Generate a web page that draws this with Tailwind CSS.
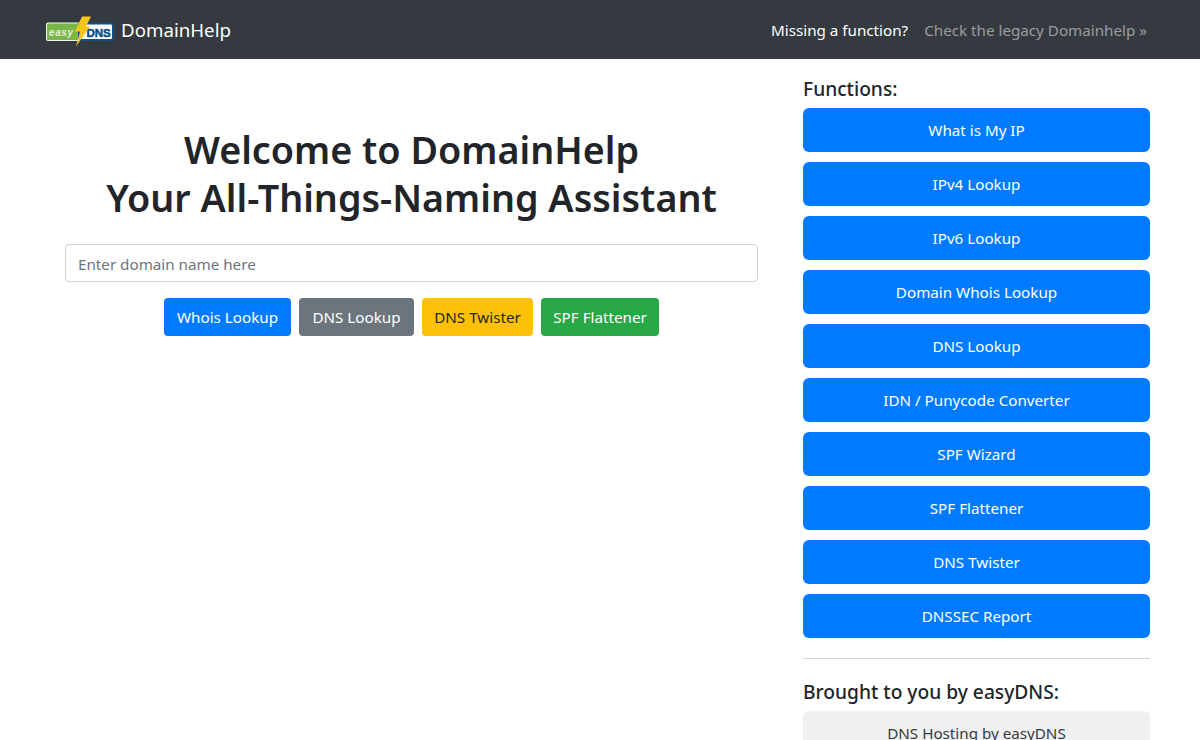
<!DOCTYPE html>
<html lang="en">
  <head>
    <meta charset="UTF-8" />
    <title>DomainHelp</title>
    <script src="https://cdn.jsdelivr.net/npm/@tailwindcss/browser@4"></script>
  </head>
  <body class="bg-white h-[740px] overflow-hidden font-['Noto_Sans',sans-serif] text-[#212529]">
    <nav class="h-[59px] bg-[#343a40] flex items-center pl-[46px] pr-[53px]">
      <svg width="68" height="34" viewBox="0 0 68 34" class="shrink-0">
        <rect x="0" y="9.500" width="36" height="18.500" rx="2" fill="#f2f5ee" />
        <rect x="1" y="10.500" width="34" height="16.500" rx="1.500" fill="#7ab648" />
        <rect x="32" y="9.500" width="36" height="18.500" rx="2.500" fill="#0f4d84" />
        <rect x="34" y="11.500" width="32" height="14.500" rx="1" fill="#fff" />
        <text x="3" y="23" font-family="Liberation Sans" font-size="10" font-weight="700" font-style="italic" letter-spacing="0.600" fill="#e6f0d8">easy</text>
        <text x="40.500" y="23.500" font-family="Liberation Sans" font-size="11.500" font-weight="700" stroke="#0f4d84" stroke-width="0.500" fill="#0f4d84">DNS</text>
        <polygon points="36,3.500 45,3.500 40,13.500 44,13.500 30,33.500 34,18.500 29,18.500" fill="#f5c518" />
      </svg>
      <span class="ml-[7px] text-white text-[18.700px] leading-none relative top-px">DomainHelp</span>
      <a class="ml-auto text-white text-[15.200px] relative top-px">Missing a function?</a>
      <a class="ml-4 text-white/50 text-[15.200px] relative top-px">Check the legacy Domainhelp »</a>
    </nav>
    <main class="flex pl-[65px]">
      <section class="w-[693px] shrink-0 pt-[67px]">
        <h1 class="text-[37.700px] leading-[48px] font-semibold text-center">Welcome to DomainHelp<br />Your All-Things-Naming Assistant</h1>
        <input class="block mt-[22px] w-full h-[38px] px-3 pt-0.5 border border-[#ced4da] rounded text-[15.200px] placeholder:text-[#6c757d]" placeholder="Enter domain name here" />
        <div class="mt-4 flex justify-center gap-2 text-[15.200px]">
          <button class="h-[38px] w-[127px] rounded bg-[#007bff] text-white">Whois Lookup</button>
          <button class="h-[38px] w-[115px] rounded bg-[#6c757d] text-white">DNS Lookup</button>
          <button class="h-[38px] w-[111px] rounded bg-[#ffc107] text-[#212529]">DNS Twister</button>
          <button class="h-[38px] w-[118px] rounded bg-[#28a745] text-white">SPF Flattener</button>
        </div>
      </section>
      <aside class="w-[347px] ml-[45px] shrink-0 pt-[18px]">
        <h5 class="text-[19.200px] leading-6 font-medium mb-[7px]">Functions:</h5>
        <div class="flex flex-col gap-[10px] text-[15.200px] text-white text-center">
          <a class="h-[44px] flex items-center justify-center rounded-md bg-[#007bff]">What is My IP</a>
          <a class="h-[44px] flex items-center justify-center rounded-md bg-[#007bff]">IPv4 Lookup</a>
          <a class="h-[44px] flex items-center justify-center rounded-md bg-[#007bff]">IPv6 Lookup</a>
          <a class="h-[44px] flex items-center justify-center rounded-md bg-[#007bff]">Domain Whois Lookup</a>
          <a class="h-[44px] flex items-center justify-center rounded-md bg-[#007bff]">DNS Lookup</a>
          <a class="h-[44px] flex items-center justify-center rounded-md bg-[#007bff]">IDN / Punycode Converter</a>
          <a class="h-[44px] flex items-center justify-center rounded-md bg-[#007bff]">SPF Wizard</a>
          <a class="h-[44px] flex items-center justify-center rounded-md bg-[#007bff]">SPF Flattener</a>
          <a class="h-[44px] flex items-center justify-center rounded-md bg-[#007bff]">DNS Twister</a>
          <a class="h-[44px] flex items-center justify-center rounded-md bg-[#007bff]">DNSSEC Report</a>
        </div>
        <hr class="mt-5 mb-[21px] border-[#d3d3d3]" />
        <h5 class="text-[19.200px] leading-6 font-medium mb-[7px]">Brought to you by easyDNS:</h5>
        <a class="h-[44px] flex items-center justify-center rounded-md bg-[#f0f0f0] text-[#343a40] text-[15.200px]">DNS Hosting by easyDNS</a>
      </aside>
    </main>
  </body>
</html>
